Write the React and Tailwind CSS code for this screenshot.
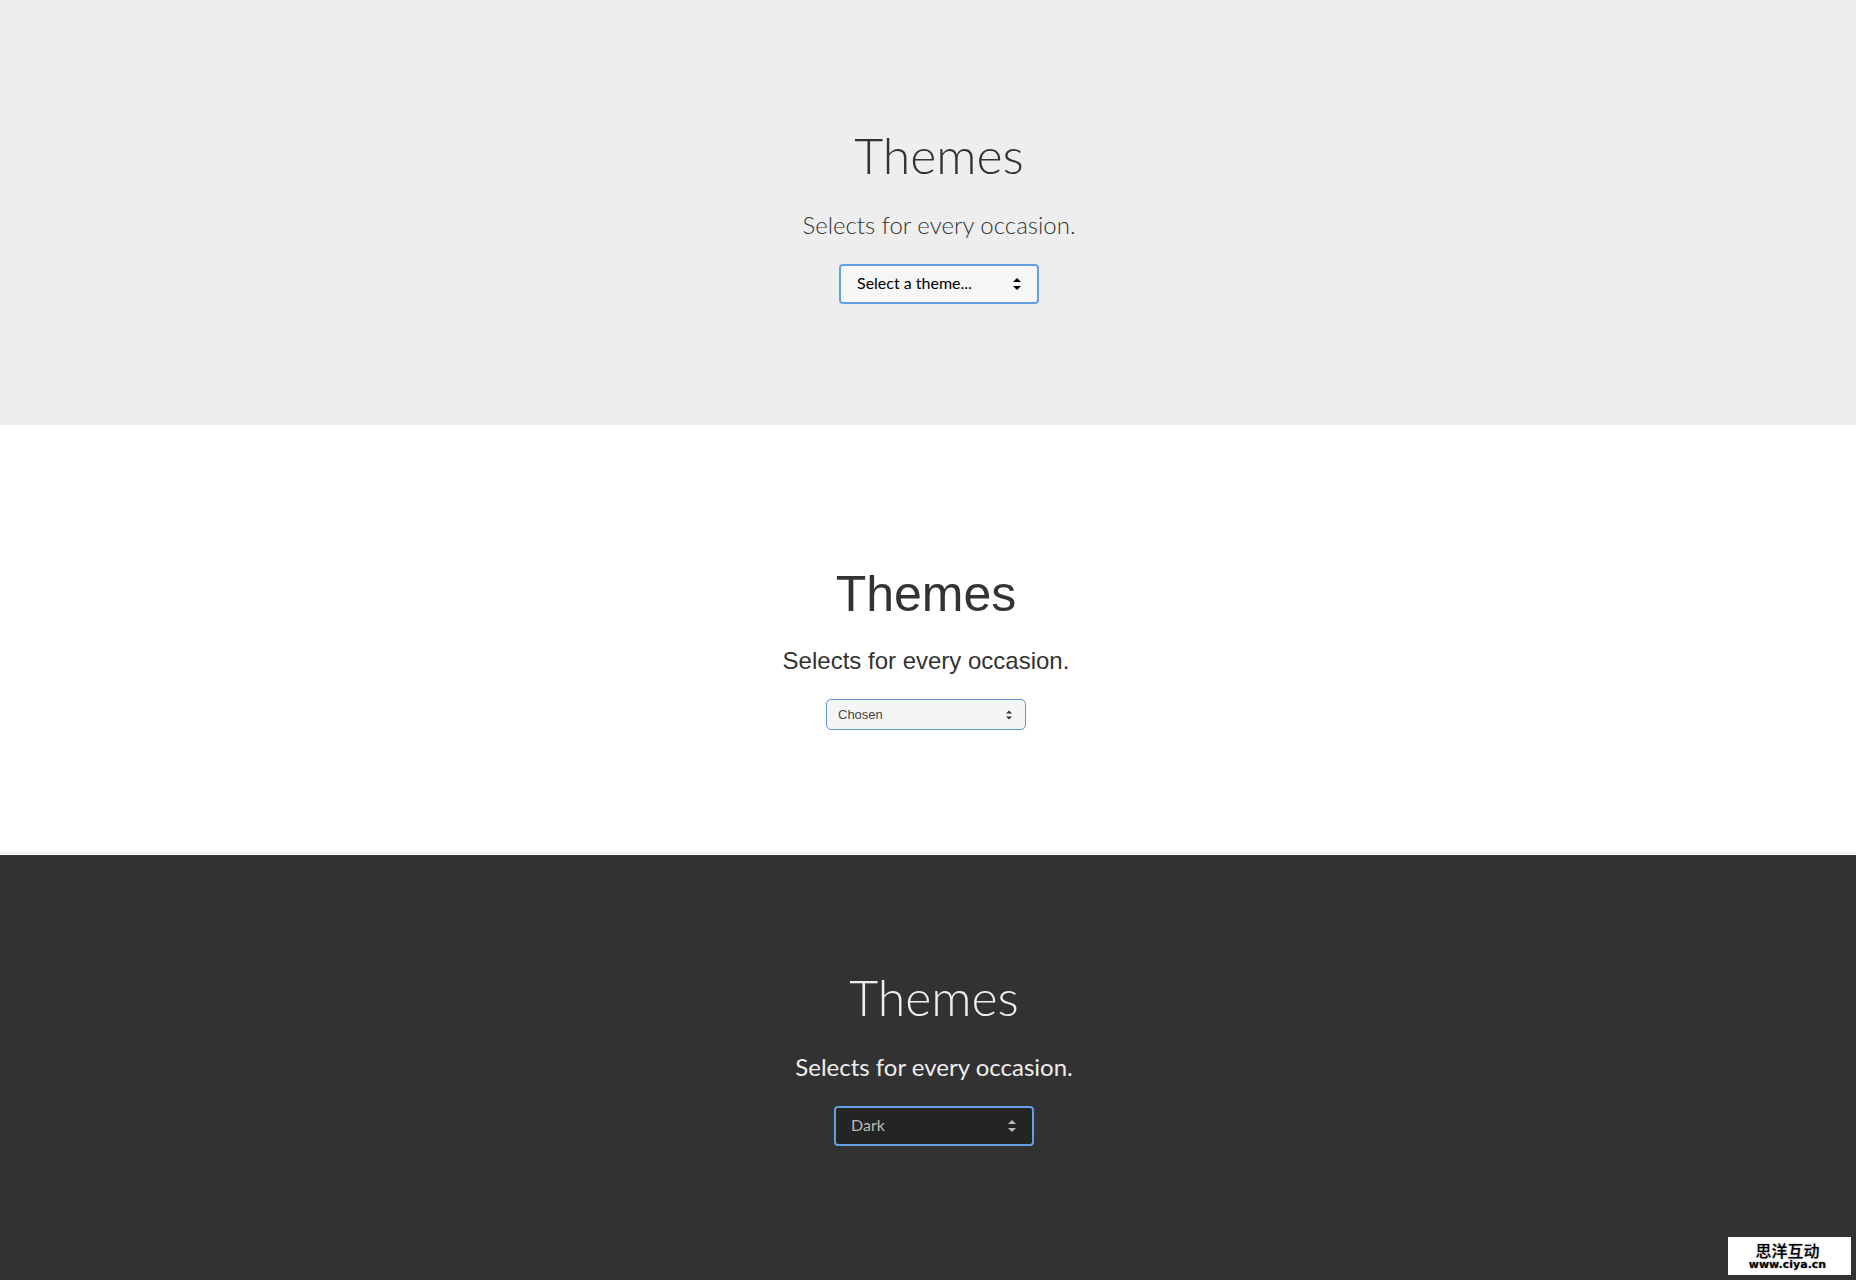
import React, { useState } from "react";

const options = ["Select a theme...", "Chosen", "Dark"];

const Arrows = ({ className }) => (
  <svg viewBox="0 0 8 12" className={className} fill="currentColor">
    <path d="M4 0 8 4H0z" />
    <path d="M4 12 0 8h8z" />
  </svg>
);

const ThemeSelect = ({ initial, selectClass, arrowClass }) => {
  const [value, setValue] = useState(initial);

  return (
    <div className="relative w-[200px]">
      <select
        aria-label="Theme"
        value={value}
        onChange={(e) => setValue(e.target.value)}
        className={`block w-full appearance-none outline-none ${selectClass}`}
      >
        {options.map((option) => (
          <option key={option} value={option}>
            {option}
          </option>
        ))}
      </select>
      <Arrows className={`pointer-events-none absolute inset-y-0 my-auto ${arrowClass}`} />
    </div>
  );
};

const App = () => {
  return (
    <main className="flex min-h-screen flex-col bg-white text-center">
      <section className="flex flex-col items-center bg-[#eeeeee] pt-[127px] pb-[121px] pl-[22px] font-['Lato',sans-serif] text-[#333333]">
        <h1 className="text-[50px] leading-[56px] font-light">Themes</h1>
        <p className="mt-[26px] text-2xl leading-8 font-light">
          Selects for every occasion.
        </p>
        <div className="mt-[23px]">
          <ThemeSelect
            initial="Select a theme..."
            selectClass="h-10 rounded-sm border-2 border-[#639fe4] bg-[#f6f6f6] px-4 pb-0.5 text-base text-black"
            arrowClass="right-[18px] h-3 w-2 text-black"
          />
        </div>
      </section>

      <section className="flex flex-col items-center border-b-2 border-[#eeeeee] pt-[141px] pr-1 pb-[122px] font-['Liberation_Sans',Arial,sans-serif] text-[#333333]">
        <h1 className="text-[50px] leading-[56px]">Themes</h1>
        <p className="mt-[23px] text-2xl leading-8">
          Selects for every occasion.
        </p>
        <div className="mt-[22px]">
          <ThemeSelect
            initial="Chosen"
            selectClass="h-[31px] rounded-[5px] border border-[#5f94d6] bg-[#f5f5f5] px-[11px] text-[13px] text-[#444444]"
            arrowClass="right-[14px] h-[10px] w-[6px] text-[#333333]"
          />
        </div>
      </section>

      <section className="mt-px flex grow flex-col items-center bg-[#323232] pt-[114px] pb-[132px] pl-3 font-['Lato',sans-serif] text-[#eeeeee]">
        <h1 className="text-[50px] leading-[56px] font-light">Themes</h1>
        <p className="mt-[26px] text-2xl leading-8">
          Selects for every occasion.
        </p>
        <div className="mt-[23px]">
          <ThemeSelect
            initial="Dark"
            selectClass="h-10 rounded-sm border-2 border-[#639fe4] bg-[#242424] px-[15px] pb-0.5 text-base text-[#bbbbbb]"
            arrowClass="right-[18px] h-3 w-2 text-[#bbbbbb]"
          />
        </div>
      </section>

      <div className="absolute right-[5px] bottom-[5px] flex h-[38px] w-[123px] flex-col items-center justify-center bg-white pr-1 text-black">
        <span className="font-['Noto_Sans_CJK_SC',sans-serif] text-base leading-[18px] font-medium text-shadow-[0_0_2px_#999999]">
          思洋互动
        </span>
        <span className="font-['DejaVu_Sans',sans-serif] text-[11px] leading-3 font-bold text-shadow-[0_0_2px_#999999]">
          www.ciya.cn
        </span>
      </div>
    </main>
  );
};

export default App;
